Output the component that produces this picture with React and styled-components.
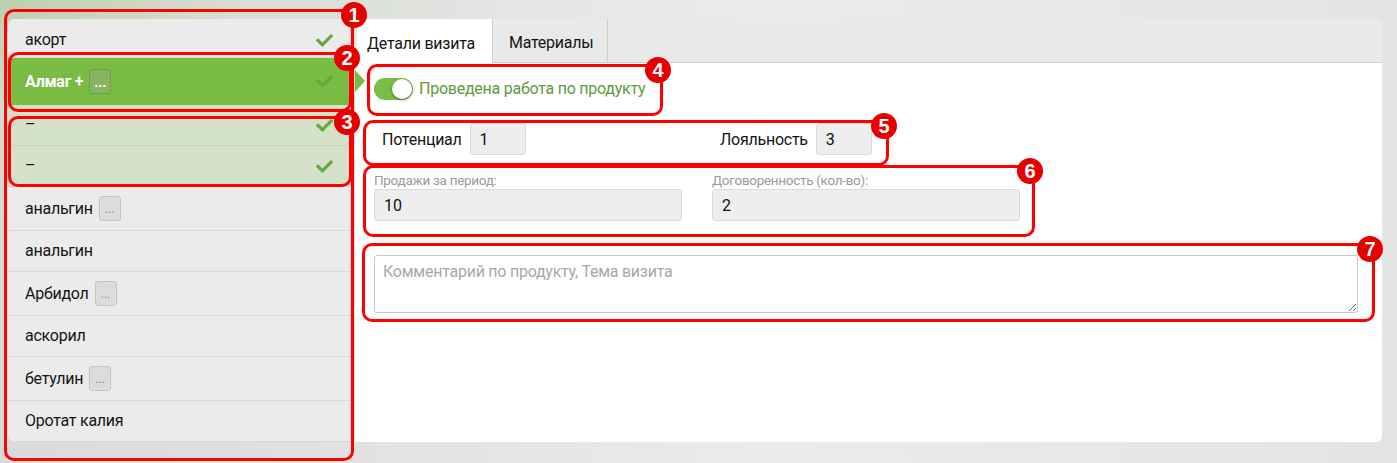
import React from 'react';
import styled, { createGlobalStyle, css } from 'styled-components';
import { FaCheck } from 'react-icons/fa';

const GlobalStyle = createGlobalStyle`
  html, body {
    margin: 0;
    padding: 0;
  }
  body {
    font-family: Roboto, 'Noto Sans', sans-serif;
    font-size: 16px;
    letter-spacing: -0.25px;
    color: #151515;
    background:
      radial-gradient(ellipse 520px 260px at 0 0, #bcd0b0 0%, rgba(210, 222, 202, 0.6) 45%, rgba(230, 230, 230, 0) 100%),
      linear-gradient(to right, #dadada 0%, #ebebeb 55%, #e4e4e4 100%);
    min-height: 463px;
  }
`;

const products = [
  { name: 'акорт', done: true, state: 'plain', more: false },
  { name: 'Алмаг +', done: true, state: 'active', more: true },
  { name: '–', done: true, state: 'done', more: false },
  { name: '–', done: true, state: 'done', more: false },
  { name: 'анальгин', state: 'plain', more: true },
  { name: 'анальгин', state: 'plain', more: false },
  { name: 'Арбидол', state: 'plain', more: true },
  { name: 'аскорил', state: 'plain', more: false },
  { name: 'бетулин', state: 'plain', more: true },
  { name: 'Оротат калия', state: 'plain', more: false },
];

const marks = [
  { n: 1, left: 4, top: 9, width: 350, height: 452, dx: 5 },
  { n: 2, left: 8, top: 52, width: 344, height: 60 },
  { n: 3, left: 8, top: 116, width: 344, height: 71 },
  { n: 4, left: 367, top: 64, width: 296, height: 52 },
  { n: 5, left: 363, top: 120, width: 526, height: 46 },
  { n: 6, left: 363, top: 165, width: 672, height: 72 },
  { n: 7, left: 362, top: 243, width: 1013, height: 79 },
];

const App = () => {
  return (
    <>
      <GlobalStyle />
      <Page>
        <ProductList>
          {products.map((p, index) => (
            <Row key={index} state={p.state}>
              <RowName active={p.state === 'active'}>
                {p.name}
                {p.more && <MoreButton active={p.state === 'active'}>...</MoreButton>}
              </RowName>
              {p.done && (
                <Check active={p.state === 'active'}>
                  <FaCheck size={17} />
                </Check>
              )}
            </Row>
          ))}
        </ProductList>

        <Panel>
          <Tabs>
            <Tab active>Детали визита</Tab>
            <Tab>Материалы</Tab>
          </Tabs>
          <Content>
            <ToggleRow>
              <Track>
                <Knob />
              </Track>
              <ToggleLabel>Проведена работа по продукту</ToggleLabel>
            </ToggleRow>

            <Columns>
              <InlineField>
                <span>Потенциал</span>
                <SmallInput readOnly value="1" />
              </InlineField>
              <InlineField>
                <span>Лояльность</span>
                <SmallInput readOnly value="3" />
              </InlineField>
            </Columns>

            <Columns stacked>
              <StackedField>
                <FieldLabel>Продажи за период:</FieldLabel>
                <WideInput readOnly value="10" />
              </StackedField>
              <StackedField>
                <FieldLabel>Договоренность (кол-во):</FieldLabel>
                <WideInput readOnly value="2" />
              </StackedField>
            </Columns>

            <Comment autoFocus placeholder="Комментарий по продукту, Тема визита" />
          </Content>
        </Panel>

        {marks.map((m) => (
          <Mark
            key={m.n}
            style={{ left: m.left, top: m.top, width: m.width, height: m.height }}
          >
            <Badge shift={m.dx}>{m.n}</Badge>
          </Mark>
        ))}
      </Page>
    </>
  );
};

export default App;

const Page = styled.div`
  position: relative;
  display: flex;
  gap: 5px;
  padding: 19px 15px 21px 8px;
  box-sizing: border-box;
  width: 1397px;
  height: 463px;
`;

const ProductList = styled.div`
  width: 342px;
  flex-shrink: 0;
  height: 423px;
  background: #ebebeb;
  border-radius: 6px 0 0 6px;
  display: flex;
  flex-direction: column;
  box-shadow: 1px 0 0 #d4d4d4;
`;

const Row = styled.div`
  position: relative;
  display: flex;
  align-items: center;
  justify-content: space-between;
  padding: 9px 17px;
  min-height: 22px;
  border-bottom: 1px solid #d9d9d9;
  ${(props) =>
    props.state === 'done' &&
    css`
      background: #d5e2c9;
      border-bottom-color: #c5d3b9;
    `}
  ${(props) =>
    props.state === 'active' &&
    css`
      background: #78bc43;
      padding-top: 11px;
      padding-bottom: 10px;
      border-bottom-color: #78bc43;
      z-index: 2;
      &::after {
        content: '';
        position: absolute;
        left: calc(100% + 5px);
        top: 50%;
        margin-top: -11px;
        border-left: 10px solid #78bc43;
        border-top: 11px solid transparent;
        border-bottom: 11px solid transparent;
      }
    `}
  &:first-child {
    border-top-left-radius: 6px;
    padding-top: 10px;
    padding-bottom: 6px;
  }
  &:last-child {
    border-bottom-left-radius: 6px;
  }
`;

const RowName = styled.div`
  display: flex;
  align-items: center;
  gap: 6px;
  line-height: 22px;
  ${(props) =>
    props.active &&
    css`
      color: #ffffff;
      font-weight: bold;
    `}
`;

const MoreButton = styled.span`
  display: inline-flex;
  align-items: center;
  justify-content: center;
  width: 22px;
  height: 25px;
  box-sizing: border-box;
  border-radius: 3px;
  font-size: 12px;
  line-height: 1;
  letter-spacing: 0;
  color: #8c8c8c;
  background: #dcdcdc;
  border: 1px solid #c4c4c4;
  ${(props) =>
    props.active &&
    css`
      color: #ffffff;
      font-size: 14px;
      font-weight: bold;
      background: #86b461;
      border-color: #6f9f4c;
    `}
`;

const Check = styled.span`
  display: flex;
  color: #68a843;
  ${(props) =>
    props.active &&
    css`
      color: #64a23a;
      opacity: 0.75;
    `}
`;

const Panel = styled.div`
  flex: 1;
  height: 423px;
  background: #ffffff;
  border-radius: 0 6px 6px 0;
  display: flex;
  flex-direction: column;
  overflow: hidden;
`;

const Tabs = styled.div`
  display: flex;
  height: 44px;
  background: #e9e9e9;
  border-bottom: 1px solid #d0d0d0;
  box-sizing: border-box;
  padding-left: 2px;
`;

const Tab = styled.div`
  display: flex;
  align-items: center;
  padding: 4px 16px 0 10px;
  border-right: 1px solid #d0d0d0;
  ${(props) =>
    props.active &&
    css`
      background: #ffffff;
      margin-bottom: -1px;
      padding-right: 17px;
    `}
  ${(props) =>
    !props.active &&
    css`
      padding-left: 16px;
      padding-right: 14px;
    `}
`;

const Content = styled.div`
  display: flex;
  flex-direction: column;
  padding: 14px 24px 0 19px;
`;

const ToggleRow = styled.div`
  display: flex;
  align-items: center;
  gap: 6px;
  height: 23px;
`;

const Track = styled.div`
  display: flex;
  align-items: center;
  justify-content: flex-end;
  width: 39px;
  height: 22px;
  padding: 1px;
  box-sizing: border-box;
  border-radius: 11px;
  background: #79bd44;
`;

const Knob = styled.div`
  width: 20px;
  height: 20px;
  border-radius: 50%;
  background: #ffffff;
  box-shadow: 0 1px 3px rgba(0, 0, 0, 0.45);
`;

const ToggleLabel = styled.span`
  color: #5e9b3a;
`;

const Columns = styled.div`
  display: grid;
  grid-template-columns: 338px 338px;
  margin-top: ${(props) => (props.stacked ? '18px' : '23px')};
`;

const InlineField = styled.div`
  display: flex;
  align-items: center;
  gap: 8px;
  padding-left: 8px;
`;

const inputBase = css`
  height: 32px;
  box-sizing: border-box;
  padding: 0 9px;
  border: 1px solid #dadada;
  border-radius: 3px;
  background: #eeeeee;
  font-family: Roboto, sans-serif;
  font-size: 16px;
  color: #111111;
  outline: none;
`;

const SmallInput = styled.input`
  ${inputBase};
  width: 56px;
`;

const StackedField = styled.div`
  display: flex;
  flex-direction: column;
`;

const FieldLabel = styled.label`
  font-size: 13.5px;
  line-height: 15px;
  letter-spacing: -0.3px;
  color: #9a9a9a;
  margin-bottom: 1px;
`;

const WideInput = styled.input`
  ${inputBase};
  width: 308px;
`;

const Comment = styled.textarea`
  margin-top: 34px;
  height: 58px;
  box-sizing: border-box;
  padding: 6px 8px;
  border: 1px solid #c8c8c8;
  border-radius: 3px;
  font-family: Roboto, sans-serif;
  font-size: 16px;
  letter-spacing: -0.25px;
  color: #111111;
  outline: none;
  resize: vertical;
  &::placeholder {
    color: #a8a8a8;
  }
`;

const Mark = styled.div`
  position: absolute;
  box-sizing: border-box;
  border: 3px solid #ff0000;
  border-radius: 10px;
  pointer-events: none;
  z-index: 5;
`;

const Badge = styled.div`
  position: absolute;
  top: -10px;
  right: ${(props) => -11 - (props.shift || 0)}px;
  width: 26px;
  height: 26px;
  border-radius: 50%;
  background: #e60000;
  color: #ffffff;
  font-family: 'Liberation Sans', Arial, sans-serif;
  font-weight: bold;
  font-size: 20px;
  line-height: 26px;
  letter-spacing: 0;
  text-align: center;
`;
